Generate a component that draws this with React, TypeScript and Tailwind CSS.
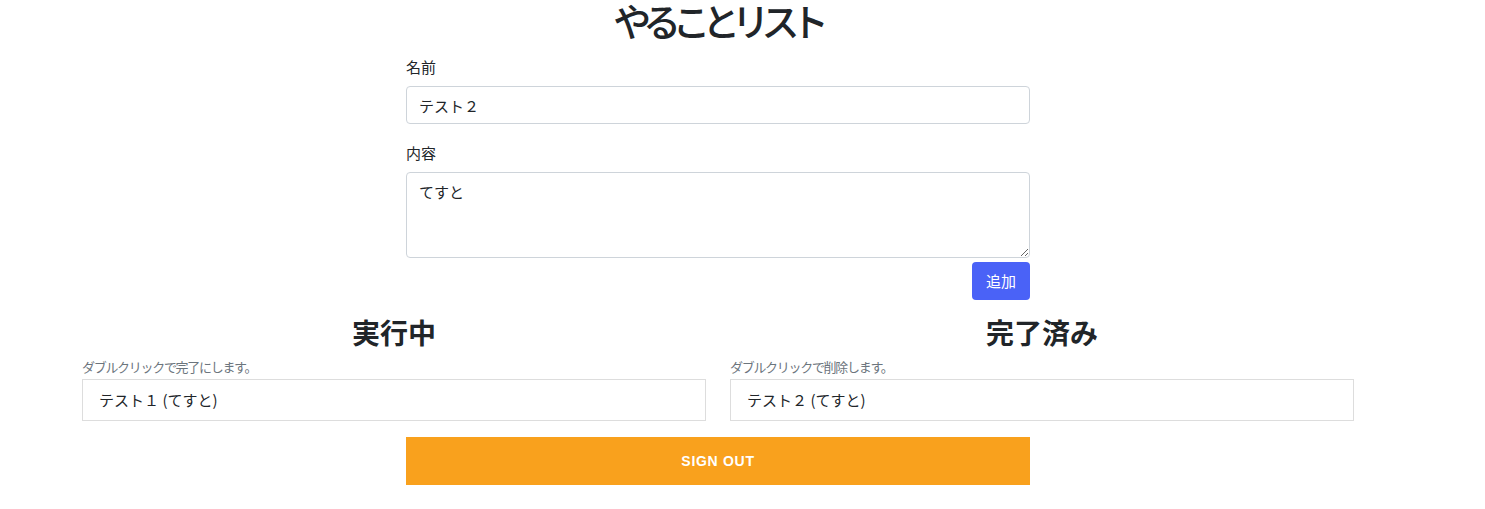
import { useState } from "react";

type Todo = { name: string; body: string };

const jp = "font-['Noto_Sans_CJK_JP','Noto_Sans',sans-serif]";

export default function App() {
  const [name, setName] = useState("テスト２");
  const [body, setBody] = useState("てすと");
  const [doing] = useState<Todo[]>([{ name: "テスト１", body: "てすと" }]);
  const [done] = useState<Todo[]>([{ name: "テスト２", body: "てすと" }]);

  return (
    <div className={`min-h-screen bg-white text-[#212529] ${jp}`}>
      <div className="w-[1436px] flex flex-col items-center">
        {/* Title */}
        <h1 className="pr-[2px] text-[38px] leading-[40px] font-medium tracking-[-0.22em] text-center">やることリスト</h1>

        {/* Form */}
        <div className="w-[624px] mt-[15px] flex flex-col">
          <label className="text-[15px] leading-[24px]">名前</label>
          <input
            value={name}
            onChange={(e) => setName(e.target.value)}
            className="mt-[7px] h-[38px] px-3 border border-[#ced4da] rounded-[4px] text-[15px] outline-none"
          />
          <label className="mt-[17px] text-[15px] leading-[24px]">内容</label>
          <textarea
            value={body}
            onChange={(e) => setBody(e.target.value)}
            className="mt-[7px] h-[86px] px-3 py-[8px] border border-[#ced4da] rounded-[4px] text-[15px] outline-none"
          />
          <div className="flex justify-end mt-[4px]">
            <button className="h-[38px] w-[58px] rounded-[4px] bg-[#4a62f7] text-white text-[15px]">追加</button>
          </div>
        </div>

        {/* Lists */}
        <div className="w-[1272px] mt-[12px] grid grid-cols-2 gap-[24px]">
          <Column title="実行中" hint="ダブルクリックで完了にします。" items={doing} />
          <Column title="完了済み" hint="ダブルクリックで削除します。" items={done} />
        </div>

        <button className="mt-[16px] w-[624px] h-[48px] bg-[#f9a11d] text-white text-[14px] font-bold tracking-[0.05em] font-['Liberation_Sans',sans-serif]">
          SIGN OUT
        </button>
      </div>
    </div>
  );
}

function Column({ title, hint, items }: { title: string; hint: string; items: Todo[] }) {
  return (
    <div className="flex flex-col">
      <h3 className="text-[28px] leading-[40px] font-bold text-center">{title}</h3>
      <p className="mt-[6px] text-[13px] leading-[18px] tracking-[-0.1em] text-[#6c757d]">{hint}</p>
      {items.map((t) => (
        <div key={t.name} className="mt-[3px] h-[42px] flex items-center px-4 border border-[#dddddd] text-[15px]">
          {t.name} ({t.body})
        </div>
      ))}
    </div>
  );
}
